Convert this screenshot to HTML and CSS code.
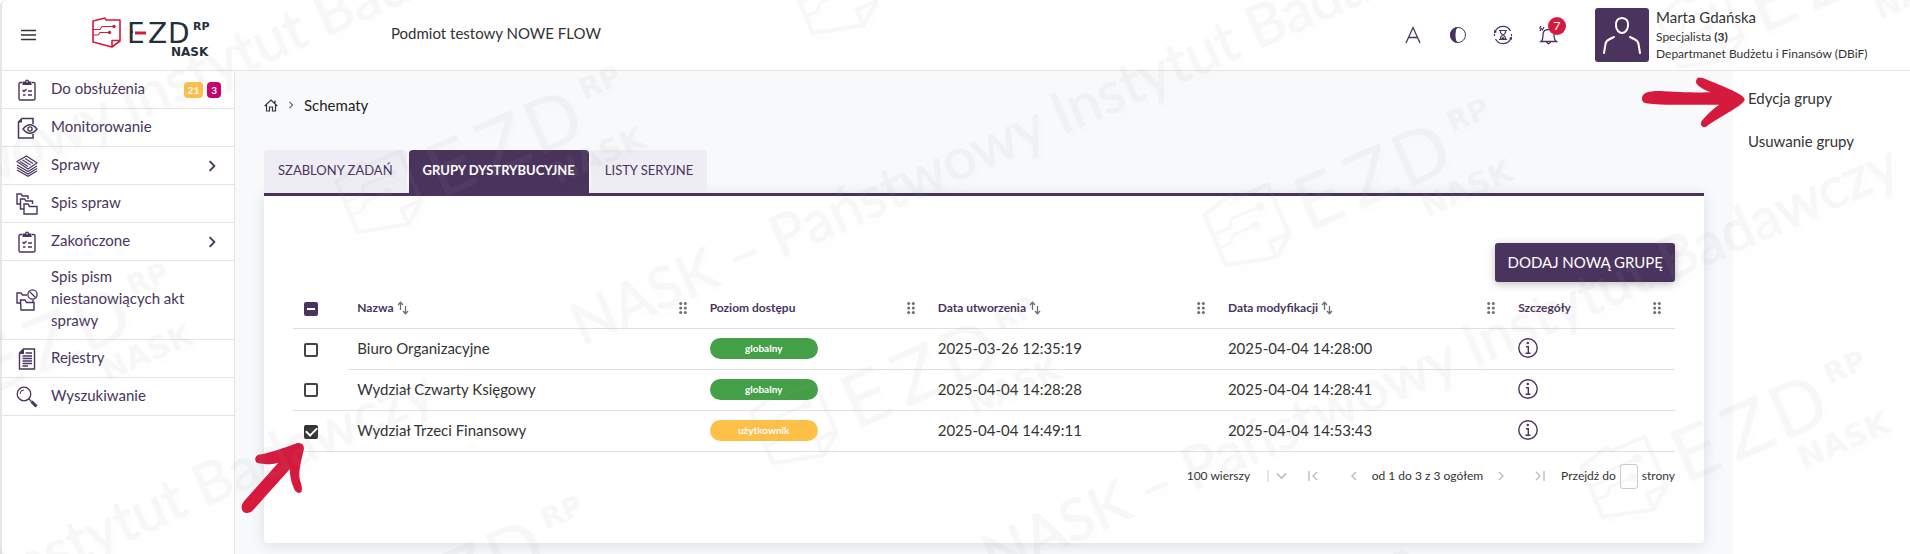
FILE: index.html
```html
<!DOCTYPE html>
<html lang="pl">
<head>
<meta charset="utf-8">
<meta name="viewport" content="width=device-width, initial-scale=1">
<title>Schematy – EZD RP</title>
<link rel="stylesheet" href="styles.css">
</head>
<body>
<svg class="sprite" aria-hidden="true">
  <defs>
    <symbol id="logo-mark" viewBox="0 0 30 32">
      <path class="mark-line" d="M2 5 L14 2 L15 4 L29 4 V25 L21 31 L2 26 Z M29 24.500 H21 V31" fill="none" stroke-width="1.600" stroke-linejoin="round"/>
      <path class="mark-line" d="M2 13.500 H9 L11 10.500 H23 M2 19 H7 L9 16.500 H18" fill="none" stroke-width="1.100"/>
      <circle class="mark-dot" cx="23" cy="10.500" r="1.700"/><circle class="mark-dot" cx="18.500" cy="16.500" r="1.700"/>
    </symbol>
    <symbol id="i-clip" viewBox="0 0 22 22">
      <path d="M6 3.500 H4.500 A1.500 1.500 0 0 0 3 5 V19.500 A1.500 1.500 0 0 0 4.500 21 H17.500 A1.500 1.500 0 0 0 19 19.500 V5 A1.500 1.500 0 0 0 17.500 3.500 H16" fill="none" stroke="currentColor" stroke-width="1.400"/>
      <path d="M6.500 2.500 H9 A2 2 0 0 1 13 2.500 H15.500 V6 H6.500 Z" fill="currentColor"/><circle cx="11" cy="2.700" r=".8" fill="#fff"/>
      <path d="M6.500 11 L8 12.500 L10.500 10 M12 12 H16 M12 16 H16 M7 16 H9.500" fill="none" stroke="currentColor" stroke-width="1.300"/>
    </symbol>
    <symbol id="i-watch" viewBox="0 0 22 22">
      <path d="M17 7 V1.500 H6 L2.500 5 V21 H17 V17" fill="none" stroke="currentColor" stroke-width="1.500"/>
      <path d="M6 1 V5.500 H2 Z" fill="currentColor"/>
      <path d="M7 12 Q14 3.500 21 12 Q14 20.500 7 12 Z" fill="#fff" stroke="currentColor" stroke-width="1.400"/>
      <circle cx="14" cy="12" r="2.100" fill="none" stroke="currentColor" stroke-width="1.400"/>
    </symbol>
    <symbol id="i-stack" viewBox="0 0 22 22">
      <path d="M1 6.500 L10.500 1 L21 8 L12 14 Z M4 6.500 L12 11.500 M6.500 5 L14.500 10 M9 3.500 L17 8.500" fill="none" stroke="currentColor" stroke-width="1.100"/>
      <path d="M1 10 L12 16.500 L21 11 M1 12.500 L12 19 L21 13.500 M1 15 L12 21.300 L21 16" fill="none" stroke="currentColor" stroke-width="1.100"/>
    </symbol>
    <symbol id="i-folders" viewBox="0 0 22 22">
      <path d="M4 11 H1 V1 H5 L6.500 3 H12 V6 M8 16 H4.500 V6 H8.500 L10 8 H16.500 V11 M8 11 H12 L13.500 13.500 H21 V21 H8 Z" fill="none" stroke="currentColor" stroke-width="1.400"/>
    </symbol>
    <symbol id="i-folderban" viewBox="0 0 22 22">
      <path d="M4.500 14 H1 V4 H5 L6.500 6 H11 M4.500 11 H9 L10.500 13.500 H18 V21 H5 Z M17 11 V13" fill="none" stroke="currentColor" stroke-width="1.400"/>
      <circle cx="16.500" cy="5.500" r="4.600" fill="#fff" stroke="currentColor" stroke-width="1.300"/><path d="M13.500 2.500 L19.500 8.500" stroke="currentColor" stroke-width="1.300"/>
    </symbol>
    <symbol id="i-doc" viewBox="0 0 22 22">
      <path d="M7.500 1 H18.500 V21 H3.500 V5 Z" fill="none" stroke="currentColor" stroke-width="1.400"/><path d="M8 .5 V6 H3 Z" fill="currentColor"/>
      <path d="M9.500 5 H16 M6.500 8 H16 M6.500 10.500 H16 M6.500 13 H16 M6.500 15.500 H16 M6.500 18 H12" stroke="currentColor" stroke-width="1.300"/>
    </symbol>
    <symbol id="i-search" viewBox="0 0 22 22">
      <circle cx="8" cy="8" r="6.800" fill="none" stroke="currentColor" stroke-width="1.300"/>
      <path d="M4 8 A4 4 0 0 1 8 4" fill="none" stroke="currentColor"/><path d="M12.500 12.500 L15.500 15.500" stroke="currentColor" stroke-width="1.300"/>
      <path d="M15.500 15.500 L20.500 20.500" stroke="currentColor" stroke-width="3"/>
    </symbol>
    <symbol id="i-right" viewBox="0 0 10 10"><path d="M3 1 L7 5 L3 9" fill="none" stroke="currentColor" stroke-width="1.500"/></symbol>
    <symbol id="i-sort" viewBox="0 0 12 14"><path d="M3.500 9 V1.500 M1 4 L3.500 1.300 L6 4 M8.500 5 V12.500 M6 10 L8.500 12.700 L11 10" fill="none" stroke="#707070" stroke-width="1.300"/></symbol>
    <symbol id="i-grip" viewBox="0 0 8 12"><g fill="#707070"><circle cx="1.700" cy="1.500" r="1.500"/><circle cx="6.300" cy="1.500" r="1.500"/><circle cx="1.700" cy="6" r="1.500"/><circle cx="6.300" cy="6" r="1.500"/><circle cx="1.700" cy="10.500" r="1.500"/><circle cx="6.300" cy="10.500" r="1.500"/></g></symbol>
    <symbol id="i-info" viewBox="0 0 20 20"><circle cx="10" cy="10" r="9.200" fill="none" stroke="currentColor" stroke-width="1.400"/><circle cx="9.800" cy="5" r="1.300" fill="currentColor"/><path d="M8 8.700 H10.300 V15 M7.500 15.300 H12.500" fill="none" stroke="currentColor" stroke-width="1.400"/></symbol>
    <g id="brand">
      <use href="#logo-mark" x="-2" y="-26" width="30" height="32"/>
      <g class="brand-letters">
        <text x="34" y="1">E</text><text x="55" y="1">Z</text><text x="75" y="1">D</text>
      </g>
      <text class="brand-rp" x="100" y="-12">RP</text>
      <text class="brand-nask" x="78" y="14">NASK</text>
    </g>
  </defs>
</svg>

<div class="app">
  <header class="topbar">
    <button class="burger" aria-label="Menu"><svg width="16" height="12" viewBox="0 0 16 12"><path d="M0 1.500 H15 M0 6 H15 M0 10.500 H15" stroke="#333" stroke-width="1.500"/></svg></button>
    <a class="brand" href="#" aria-label="EZD RP NASK">
      <svg width="122" height="44" viewBox="-3 -28 122 44"><use href="#brand"/><path d="M40 -12 H54 V-6 H40 Z" fill="#fff"/><path d="M42 -9 H53" stroke="#d61a3e" stroke-width="3"/></svg>
    </a>
    <p class="entity">Podmiot testowy NOWE FLOW</p>
    <div class="tools">
      <button aria-label="Rozmiar tekstu"><svg width="20" height="20" viewBox="0 0 20 20"><path d="M3 18 L10 2.500 L17 18 M5.500 12.500 H14.500" fill="none" stroke="currentColor" stroke-width="1.300"/></svg></button>
      <button aria-label="Kontrast"><svg width="20" height="20" viewBox="0 0 20 20"><circle cx="10" cy="10" r="7.500" fill="#fff" stroke="currentColor"/><path d="M10 2 A8 8 0 0 0 10 18 Q7.500 16 7.500 10 Q7.500 4 10 2" fill="currentColor"/></svg></button>
      <button aria-label="Sesja"><svg width="20" height="20" viewBox="0 0 20 20"><path d="M2 7 A8.500 8.500 0 0 1 17.500 6 M18.500 9 V11 M18 13 A8.500 8.500 0 0 1 2.500 14 M1.500 9 V11 M6 5.500 H14 M6 14.500 H14 M7.500 5.500 V7.500 L9.500 10 L7.500 12.500 V14.500 M12.500 5.500 V7.500 L10.500 10 L12.500 12.500 V14.500" fill="none" stroke="currentColor" stroke-width="1.200"/><path d="M1 5 L4 7 L1 8.500 Z M19 15 L16 13 L19 11.500 Z M8 14 L10 11.500 L12 14 Z" fill="currentColor"/></svg></button>
      <button class="bell" aria-label="Powiadomienia"><svg width="20" height="20" viewBox="0 0 20 20"><path d="M3 16.500 Q5 15 5 10 Q5 4.500 10.500 4.500 Q16 4.500 16 10 Q16 15 18.500 16.500 Z M8.500 17 Q10.500 20.500 12.500 17 M2 6 L3.500 3 M4 5.500 L6 2 M1.500 3.500 L3 1" fill="none" stroke="currentColor" stroke-width="1.300"/></svg><span class="count">7</span></button>
    </div>
    <div class="user">
      <svg class="avatar" width="54" height="54" viewBox="0 0 54 54"><rect width="54" height="54" rx="3" fill="#4a345d"/><path d="M27 10 C31.500 10 33.500 13 33 18 C32.700 22 30 25 27 25 C24 25 21.300 22 21 18 C20.500 13 22.500 10 27 10 Z M9 45 L10.500 36 Q11 33 14 31.500 L19 29 M45 45 L43.500 36 Q43 33 40 31.500 L35 29" fill="none" stroke="#fff" stroke-width="2" stroke-linecap="round"/></svg>
      <div class="who">
        <p class="name">Marta Gdańska</p>
        <p class="meta">Specjalista <b>(3)</b></p>
        <p class="meta">Departmanet Budżetu i Finansów (DBiF)</p>
      </div>
    </div>
  </header>

  <div class="columns">
    <nav class="side">
      <a href="#"><svg><use href="#i-clip"/></svg><span>Do obsłużenia</span><i class="tag amber">21</i><i class="tag pink">3</i></a>
      <a href="#"><svg><use href="#i-watch"/></svg><span>Monitorowanie</span></a>
      <a href="#"><svg><use href="#i-stack"/></svg><span>Sprawy</span><svg class="more"><use href="#i-right"/></svg></a>
      <a href="#"><svg><use href="#i-folders"/></svg><span>Spis spraw</span></a>
      <a href="#"><svg><use href="#i-clip"/></svg><span>Zakończone</span><svg class="more"><use href="#i-right"/></svg></a>
      <a href="#"><svg><use href="#i-folderban"/></svg><span>Spis pism niestanowiących akt sprawy</span></a>
      <a href="#"><svg><use href="#i-doc"/></svg><span>Rejestry</span></a>
      <a href="#"><svg><use href="#i-search"/></svg><span>Wyszukiwanie</span></a>
    </nav>

    <main class="main">
      <div class="crumbs">
        <a href="#" aria-label="Start"><svg width="14" height="13" viewBox="0 0 14 13"><path d="M.7 7 L7 1 L13.300 7 M2.500 6 V12 H5.500 V8 H8.500 V12 H11.500 V6 M11 4 V1.500" fill="none" stroke="#333" stroke-width="1.200"/></svg></a>
        <svg class="sep" width="8" height="8"><use href="#i-right"/></svg>
        <span>Schematy</span>
      </div>
      <div class="tabs" role="tablist">
        <button role="tab">SZABLONY ZADAŃ</button>
        <button role="tab" class="on" aria-selected="true">GRUPY DYSTRYBUCYJNE</button>
        <button role="tab">LISTY SERYJNE</button>
      </div>
      <section class="card">
        <button class="primary">DODAJ NOWĄ GRUPĘ</button>
        <table>
          <colgroup><col class="c1"><col class="c2"><col class="c3"><col class="c4"><col class="c5"><col class="c6"></colgroup>
          <thead>
            <tr>
              <th><input type="checkbox" class="some" aria-label="Zaznacz wszystkie"></th>
              <th><div><span>Nazwa</span><svg class="sort"><use href="#i-sort"/></svg><svg class="grip"><use href="#i-grip"/></svg></div></th>
              <th><div><span>Poziom dostępu</span><svg class="grip"><use href="#i-grip"/></svg></div></th>
              <th><div><span>Data utworzenia</span><svg class="sort"><use href="#i-sort"/></svg><svg class="grip"><use href="#i-grip"/></svg></div></th>
              <th><div><span>Data modyfikacji</span><svg class="sort"><use href="#i-sort"/></svg><svg class="grip"><use href="#i-grip"/></svg></div></th>
              <th><div><span>Szczegóły</span><svg class="grip"><use href="#i-grip"/></svg></div></th>
            </tr>
          </thead>
          <tbody>
            <tr class="first"><td><input type="checkbox" aria-label="Biuro Organizacyjne"></td><td>Biuro Organizacyjne</td><td><span class="pill green">globalny</span></td><td>2025-03-26 12:35:19</td><td>2025-04-04 14:28:00</td><td><button class="info" aria-label="Szczegóły"><svg><use href="#i-info"/></svg></button></td></tr>
            <tr><td><input type="checkbox" aria-label="Wydział Czwarty Księgowy"></td><td>Wydział Czwarty Księgowy</td><td><span class="pill green">globalny</span></td><td>2025-04-04 14:28:28</td><td>2025-04-04 14:28:41</td><td><button class="info" aria-label="Szczegóły"><svg><use href="#i-info"/></svg></button></td></tr>
            <tr><td><input type="checkbox" checked aria-label="Wydział Trzeci Finansowy"></td><td>Wydział Trzeci Finansowy</td><td><span class="pill orange">użytkownik</span></td><td>2025-04-04 14:49:11</td><td>2025-04-04 14:53:43</td><td><button class="info" aria-label="Szczegóły"><svg><use href="#i-info"/></svg></button></td></tr>
          </tbody>
        </table>
        <div class="pager">
          <span class="rows"><select aria-label="Liczba wierszy"><option>100 wierszy</option></select><svg width="22" height="12" viewBox="0 0 22 12"><path d="M1 0 V12" stroke="#ccc"/><path d="M10 3.500 L14.500 8 L19 3.500" fill="none" stroke="#bbb" stroke-width="1.600"/></svg></span>
          <button class="first-page" aria-label="Pierwsza"><svg width="10" height="10" viewBox="0 0 10 10"><path d="M1 0 V10 M9 1 L5 5 L9 9" fill="none" stroke="#bbb" stroke-width="1.400"/></svg></button>
          <button class="prev" aria-label="Poprzednia"><svg width="10" height="10" viewBox="0 0 10 10"><path d="M7 1 L3 5 L7 9" fill="none" stroke="#bbb" stroke-width="1.400"/></svg></button>
          <span class="range">od 1 do 3 z 3 ogółem</span>
          <button class="next" aria-label="Następna"><svg width="10" height="10" viewBox="0 0 10 10"><path d="M3 1 L7 5 L3 9" fill="none" stroke="#bbb" stroke-width="1.400"/></svg></button>
          <button class="last-page" aria-label="Ostatnia"><svg width="10" height="10" viewBox="0 0 10 10"><path d="M9 0 V10 M1 1 L5 5 L1 9" fill="none" stroke="#bbb" stroke-width="1.400"/></svg></button>
          <label class="goto">Przejdź do <input type="text"> strony</label>
        </div>
      </section>
      <svg class="arrow arrow-row" width="67" height="73" viewBox="720 515 201 219" aria-hidden="true"><path d="M735 727 C722 722 722 705 732 693 L835 577 C815 583 790 582 775 579 C763 574 762 560 775 553 C800 552 860 530 890 519 C905 515 912 525 912 535 C905 565 895 600 899 625 C905 645 908 655 904 665 C895 672 885 665 880 650 C872 630 870 615 869 597 L765 713 C758 722 748 731 735 727 Z"/></svg>
    </main>

    <aside class="actions">
      <button>Edycja grupy</button>
      <button>Usuwanie grupy</button>
      <svg class="arrow arrow-edit" width="107" height="55" viewBox="630 225 321 165" aria-hidden="true"><path d="M636 296 C636 280 650 273 690 273 C730 276 790 278 842 277 C820 268 798 256 798 245 C798 233 808 229 820 235 C860 252 940 280 944 298 C948 312 870 350 828 380 C818 385 808 375 815 363 C830 345 850 325 868 314 C800 314 720 316 670 312 C645 310 636 308 636 296 Z"/></svg>
    </aside>
  </div>
</div>

<svg class="watermark" aria-hidden="true">
  <g class="wm-logos">
    <use href="#brand" transform="translate(358 232) rotate(-23.500) scale(2.600)"/>
    <use href="#brand" transform="translate(1226 265) rotate(-23.500) scale(2.600)"/>
    <use href="#brand" transform="translate(773 463) rotate(-23.500) scale(2.600)"/>
    <use href="#brand" transform="translate(1603 517) rotate(-23.500) scale(2.600)"/>
    <use href="#brand" transform="translate(813 33) rotate(-23.500) scale(2.600)"/>
    <use href="#brand" transform="translate(1679 67) rotate(-23.500) scale(2.600)"/>
    <use href="#brand" transform="translate(-94 429) rotate(-23.500) scale(2.600)"/>
    <use href="#brand" transform="translate(320 662) rotate(-23.500) scale(2.600)"/>
    <use href="#brand" transform="translate(1150 716) rotate(-23.500) scale(2.600)"/>
  </g>
  <g class="wm-text">
    <text transform="translate(582 346) rotate(-23.700)">NASK – Państwowy Instytut Badawczy</text>
    <text transform="translate(994 578) rotate(-23.700)">NASK – Państwowy Instytut Badawczy</text>
    <text transform="translate(-350 334) rotate(-23.700)">NASK – Państwowy Instytut Badawczy</text>
    <text transform="translate(-471 804) rotate(-23.700)">NASK – Państwowy Instytut Badawczy</text>
  </g>
</svg>
</body>
</html>
```
FILE: styles.css
```css
:root {
  --purple: #4a345d;
  --line: #e4e4e6;
  --ink: #333;
}
* { box-sizing: border-box; }
body {
  margin: 0;
  overflow: hidden;
  background: #fff;
  color: var(--ink);
  font: 15px/22px Lato, "Noto Sans", sans-serif;
}
p { margin: 0; }
button, input, select { font: inherit; color: inherit; }
button { padding: 0; border: 0; background: none; cursor: pointer; }
a { color: inherit; text-decoration: none; }
.sprite { position: absolute; width: 0; height: 0; }

.app {
  display: flex;
  flex-direction: column;
  min-height: 100vh;
  border-left: 2px solid #e6e6e6;
  border-top-left-radius: 6px;
}
.topbar {
  display: flex;
  align-items: center;
  height: 71px;
  border-bottom: 1px solid var(--line);
}
.burger { display: flex; margin-left: 19px; }
.brand { display: flex; margin: 2px 0 0 53px; --mark: #d61a3e; color: #22303c; }
.entity { margin-left: 179px; padding-bottom: 4px; }
.tools { display: flex; gap: 25px; margin-left: auto; color: var(--purple); }
.tools button { position: relative; display: flex; }
.count {
  position: absolute;
  left: 10px;
  top: -8px;
  width: 18px;
  height: 18px;
  border-radius: 50%;
  background: #d61a3e;
  color: #fff;
  font-size: 12px;
  line-height: 18px;
}
.user { display: flex; gap: 7px; width: 315px; margin-left: 37px; }
.who { white-space: nowrap; }
.name { line-height: 18px; padding-bottom: 2px; }
.meta { font-size: 12px; line-height: 17px; }

.mark-line { stroke: var(--mark, currentColor); }
.mark-dot { fill: var(--mark, currentColor); }
.brand-letters, .brand-rp, .brand-nask { fill: currentColor; }
.brand-letters { font: 28px "DejaVu Sans", sans-serif; }
.brand-rp { font: bold 11px "DejaVu Sans", sans-serif; }
.brand-nask { font: bold 12px "DejaVu Sans", sans-serif; }

.columns { display: flex; flex: 1; }
.side { width: 233px; border-right: 1px solid var(--line); color: var(--purple); }
.side a {
  display: flex;
  align-items: center;
  min-height: 38px;
  padding: 4px 13px 4px 14px;
  border-bottom: 1px solid var(--line);
}
.side svg { width: 22px; height: 22px; flex: none; }
.side span { flex: 1; margin-left: 13px; padding: 0 24px 4px 0; }
.side span:has(+ i), .side span:has(+ .more) { padding-right: 0; }
.side .more { width: 12px; height: 12px; margin-right: 3px; }
.tag {
  margin-left: 4px;
  padding: 0 4px;
  border-radius: 4px;
  color: #fff;
  font: bold 10px/16px Lato, sans-serif;
}
.amber { background: #ffc04a; }
.pink { background: #c9006b; }

.main {
  position: relative;
  flex: 1;
  min-width: 0;
  padding: 23px 29px 10px;
  background: #f7f9fb;
}
.crumbs { display: flex; align-items: center; color: #222; }
.crumbs a { display: flex; }
.sep { margin: 0 9px; color: #666; }
.tabs { display: flex; gap: 2px; margin-top: 34px; }
.tabs button {
  height: 43px;
  padding: 0 14px 3px;
  border-radius: 4px 4px 0 0;
  background: #eeedf3;
  color: var(--purple);
  font-size: 13px;
}
.tabs .on { background: var(--purple); color: #fff; font-weight: bold; }
.card {
  display: flow-root;
  padding: 47px 29px 54px;
  border-top: 3px solid var(--purple);
  border-radius: 0 0 4px 4px;
  background: #fff;
  box-shadow: 0 2px 14px rgb(60 80 90 / 14%);
}
.primary {
  display: block;
  height: 39px;
  margin-left: auto;
  padding: 0 12px 2px;
  border-radius: 3px;
  background: var(--purple);
  color: #fff;
  box-shadow: 0 2px 8px rgb(0 0 0 / 25%);
}
table { width: 100%; margin-top: 7px; border-collapse: collapse; table-layout: fixed; }
.c1 { width: 4%; }
.c2 { width: 25.500%; }
.c3 { width: 16.500%; }
.c4 { width: 21%; }
.c5 { width: 21%; }
.c6 { width: 12%; }
th, td { padding: 0 9px; border-bottom: 1px solid #e0e0e0; text-align: left; }
th { height: 39px; color: var(--purple); font-size: 12px; }
td { height: 41px; padding-bottom: 1px; }
.first td:first-child { border-bottom: 0; }
th div { display: flex; align-items: center; }
.sort { width: 12px; height: 14px; margin-left: 3px; }
.grip { width: 8px; height: 12px; margin: 0 5px 0 auto; }
table input {
  appearance: none;
  display: grid;
  place-items: center;
  width: 14px;
  height: 14px;
  margin: 3px 0 0 2px;
  border: 2px solid #444;
  border-radius: 2px;
}
table input:checked { background: #333; border-color: #333; }
table input:checked::after {
  content: "";
  width: 9px;
  height: 5px;
  margin-bottom: 2px;
  border: solid #fff;
  border-width: 0 0 2px 2px;
  rotate: -45deg;
}
table .some { margin-top: 1px; background: var(--purple); border-color: var(--purple); }
.some::after { content: ""; width: 8px; height: 2px; background: #fff; }
.pill {
  display: block;
  width: 108px;
  border-radius: 11px;
  color: #fff;
  font: bold 10px/21px Lato, sans-serif;
  text-align: center;
}
.green { background: #43a047; }
.orange { background: #ffc048; }
.info { display: flex; color: var(--purple); }
.info svg { width: 20px; height: 20px; }

.pager {
  display: flex;
  align-items: center;
  justify-content: flex-end;
  margin-top: 12px;
  font-size: 12px;
}
.pager button { display: flex; }
.rows { display: flex; align-items: center; }
.rows select { appearance: none; width: 80px; padding: 0; border: 0; background: none; }
.first-page { margin-left: 19px; }
.prev { margin: 0 13px 0 31px; }
.next { margin: 0 29px 0 13px; }
.goto { display: flex; align-items: center; gap: 4px; margin-left: 16px; }
.goto input { width: 18px; height: 25px; padding: 0; border: 1px solid #ccc; border-radius: 3px; background: #fff; }

.actions { position: relative; width: 177px; padding: 5px 15px; background: #fff; }
.actions button { display: block; height: 43px; white-space: nowrap; }
.arrow { position: absolute; fill: #d61a3e; }
.arrow-edit { left: -93px; top: 4px; }
.arrow-row { left: 5px; top: 371px; }

.watermark {
  position: fixed;
  inset: 0;
  width: 100%;
  height: 100%;
  pointer-events: none;
  color: #999;
  fill: #999;
  opacity: .08;
  filter: drop-shadow(3px 5px 3px rgb(120 120 120 / 20%));
}
.wm-text { font: 58px Lato, sans-serif; stroke: #999; stroke-width: 1px; }
```
